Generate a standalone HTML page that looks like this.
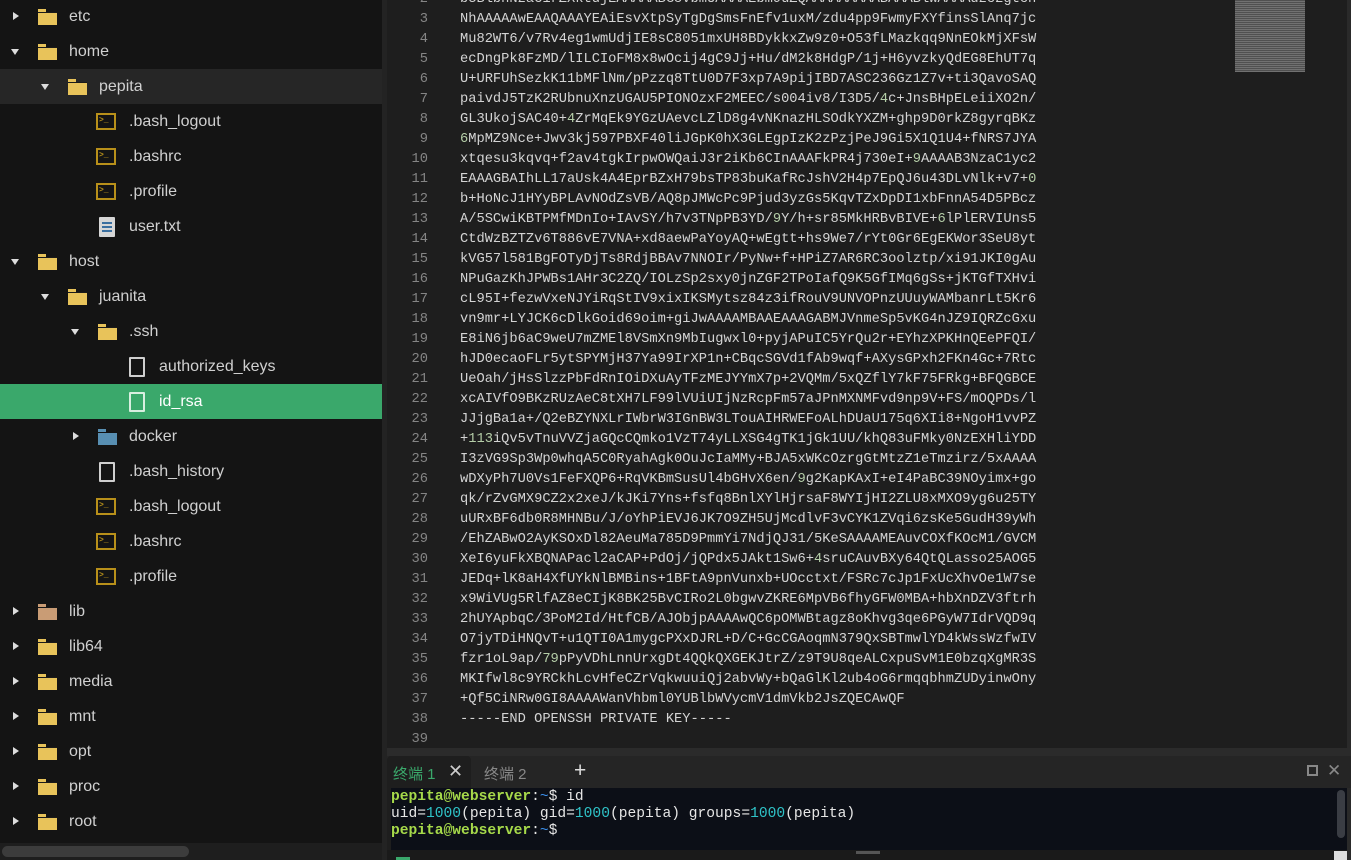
<!DOCTYPE html>
<html><head><meta charset="utf-8"><style>
*{margin:0;padding:0;box-sizing:border-box}
body{width:1351px;height:860px;overflow:hidden;background:#1e1e1e;position:relative;font-family:"Segoe UI","Liberation Sans","DejaVu Sans",sans-serif}
#side{position:absolute;left:0;top:0;width:382px;height:860px;background:#141414;overflow:hidden}
#gap{position:absolute;left:382px;top:0;width:5px;height:860px;background:#232323}
.row{position:absolute;left:0;width:382px;height:35px;color:#d0d0d0;font-size:16px;line-height:35px}
.row .t{position:absolute;top:0}
.arr{position:absolute;top:0;width:0;height:0}
.ar{border-top:4.5px solid transparent;border-bottom:4.5px solid transparent;border-left:6px solid #ddd;top:13px}
.ad{border-left:4.5px solid transparent;border-right:4.5px solid transparent;border-top:6px solid #ddd;top:15px}
.fold{position:absolute;top:10px;width:19px;height:15px}
.fold:before{content:"";position:absolute;left:0;top:0;width:8px;height:4px;background:#e8c35a}
.fold:after{content:"";position:absolute;left:0;top:3px;width:19px;height:12px;background:#e8c35a;border-top:1px solid #1a1a1a}
.term{position:absolute;top:9px;width:20px;height:17px;border:2px solid #b8901a;background:#141414;overflow:hidden}
.term:before{content:">_";position:absolute;left:1px;top:1px;font:bold 8px/9px "Liberation Mono",monospace;color:#b8901a}
.file{position:absolute;top:8px;width:16px;height:20px;border:2px solid #cfcfcf;border-radius:1px;background:transparent}
.doc{position:absolute;top:8px;width:16px;height:20px;background:#d6d6d6;border-radius:1px}
.doc i{position:absolute;left:3px;height:2px;background:#3a6fa0;width:10px}
#ed{position:absolute;left:387px;top:0;width:960px;height:748px;background:#1e1e1e;font-family:"Liberation Mono",monospace;font-size:13.72px;color:#d4d4d4;overflow:hidden}
.ln{position:absolute;left:0;width:41px;text-align:right;color:#858585}
.tx{position:absolute;left:73px;white-space:pre}
.g{color:#b5cea8}
#mm{position:absolute;left:1235px;top:0;width:70px;height:72px;background:repeating-linear-gradient(0deg,#7a7a7a 0 1px,#555 1px 2px);opacity:.9}
#tbar{position:absolute;left:387px;top:748px;width:964px;height:8px;background:#2b2b2b}
#tabs{position:absolute;left:387px;top:756px;width:964px;height:32px;background:#252525;font-family:"Liberation Sans","Noto Sans CJK SC",sans-serif;font-size:15px}
#term{position:absolute;left:391px;top:788px;width:956px;height:62px;background:#0c0f17;font-family:"Liberation Mono",monospace;font-size:14.6px;color:#e6e6e6;line-height:17px;padding-top:1px}
.pg{color:#a6d94a;font-weight:bold}
.cy{color:#2fc3c8}
.bl{color:#3b8eea}
</style></head><body>
<div id="side">
<div class="row" style="top:-1px"><span class="arr ar" style="left:13px"></span><span class="fold" style="left:38px"></span><span class="t" style="left:69px">etc</span></div>
<div class="row" style="top:34px"><span class="arr ad" style="left:11px"></span><span class="fold" style="left:38px"></span><span class="t" style="left:69px">home</span></div>
<div class="row" style="top:69px;background:#262626"><span class="arr ad" style="left:41px"></span><span class="fold" style="left:68px"></span><span class="t" style="left:99px">pepita</span></div>
<div class="row" style="top:104px"><span class="term" style="left:96px"></span><span class="t" style="left:129px">.bash_logout</span></div>
<div class="row" style="top:139px"><span class="term" style="left:96px"></span><span class="t" style="left:129px">.bashrc</span></div>
<div class="row" style="top:174px"><span class="term" style="left:96px"></span><span class="t" style="left:129px">.profile</span></div>
<div class="row" style="top:209px"><span class="doc" style="left:99px"><i style="top:5px"></i><i style="top:9px"></i><i style="top:13px"></i></span><span class="t" style="left:129px">user.txt</span></div>
<div class="row" style="top:244px"><span class="arr ad" style="left:11px"></span><span class="fold" style="left:38px"></span><span class="t" style="left:69px">host</span></div>
<div class="row" style="top:279px"><span class="arr ad" style="left:41px"></span><span class="fold" style="left:68px"></span><span class="t" style="left:99px">juanita</span></div>
<div class="row" style="top:314px"><span class="arr ad" style="left:71px"></span><span class="fold" style="left:98px"></span><span class="t" style="left:129px">.ssh</span></div>
<div class="row" style="top:349px"><span class="file" style="left:129px"></span><span class="t" style="left:159px">authorized_keys</span></div>
<div class="row" style="top:384px;background:#3aa86b;color:#fff"><span class="file" style="left:129px;border-color:#d8efe0"></span><span class="t" style="left:159px">id_rsa</span></div>
<div class="row" style="top:419px"><span class="arr ar" style="left:73px"></span><span class="fold" style="left:98px;filter:hue-rotate(170deg) saturate(1.3) brightness(.7)"></span><span class="t" style="left:129px">docker</span></div>
<div class="row" style="top:454px"><span class="file" style="left:99px"></span><span class="t" style="left:129px">.bash_history</span></div>
<div class="row" style="top:489px"><span class="term" style="left:96px"></span><span class="t" style="left:129px">.bash_logout</span></div>
<div class="row" style="top:524px"><span class="term" style="left:96px"></span><span class="t" style="left:129px">.bashrc</span></div>
<div class="row" style="top:559px"><span class="term" style="left:96px"></span><span class="t" style="left:129px">.profile</span></div>
<div class="row" style="top:594px"><span class="arr ar" style="left:13px"></span><span class="fold" style="left:38px;filter:hue-rotate(-25deg) saturate(.7) brightness(.85)"></span><span class="t" style="left:69px">lib</span></div>
<div class="row" style="top:629px"><span class="arr ar" style="left:13px"></span><span class="fold" style="left:38px"></span><span class="t" style="left:69px">lib64</span></div>
<div class="row" style="top:664px"><span class="arr ar" style="left:13px"></span><span class="fold" style="left:38px"></span><span class="t" style="left:69px">media</span></div>
<div class="row" style="top:699px"><span class="arr ar" style="left:13px"></span><span class="fold" style="left:38px"></span><span class="t" style="left:69px">mnt</span></div>
<div class="row" style="top:734px"><span class="arr ar" style="left:13px"></span><span class="fold" style="left:38px"></span><span class="t" style="left:69px">opt</span></div>
<div class="row" style="top:769px"><span class="arr ar" style="left:13px"></span><span class="fold" style="left:38px"></span><span class="t" style="left:69px">proc</span></div>
<div class="row" style="top:804px"><span class="arr ar" style="left:13px"></span><span class="fold" style="left:38px"></span><span class="t" style="left:69px">root</span></div>
<div style="position:absolute;left:0;top:843px;width:382px;height:17px;background:#1e1e1e"></div>
<div style="position:absolute;left:2px;top:846px;width:187px;height:11px;background:#3c3c3c;border-radius:6px"></div>
</div>
<div id="gap"></div>
<div id="ed">
<div style="position:absolute;left:0;top:-10px;width:960px;line-height:20px">
<div style="position:relative;height:20px"><span class="ln">2</span><span class="tx">b3BlbnNzaC1rZXktdjEAAAAABG5vbmUAAAAEbm9uZQAAAAAAAAABAAABlwAAAAdzc2gtcn</span></div>
<div style="position:relative;height:20px"><span class="ln">3</span><span class="tx">NhAAAAAwEAAQAAAYEAiEsvXtpSyTgDgSmsFnEfv1uxM/zdu4pp9FwmyFXYfinsSlAnq7jc</span></div>
<div style="position:relative;height:20px"><span class="ln">4</span><span class="tx">Mu82WT6/v7Rv4eg1wmUdjIE8sC8051mxUH8BDykkxZw9z0+O53fLMazkqq9NnEOkMjXFsW</span></div>
<div style="position:relative;height:20px"><span class="ln">5</span><span class="tx">ecDngPk8FzMD/lILCIoFM8x8wOcij4gC9Jj+Hu/dM2k8HdgP/1j+H6yvzkyQdEG8EhUT7q</span></div>
<div style="position:relative;height:20px"><span class="ln">6</span><span class="tx">U+URFUhSezkK11bMFlNm/pPzzq8TtU0D7F3xp7A9pijIBD7ASC236Gz1Z7v+ti3QavoSAQ</span></div>
<div style="position:relative;height:20px"><span class="ln">7</span><span class="tx">paivdJ5TzK2RUbnuXnzUGAU5PIONOzxF2MEEC/s004iv8/I3D5/<span class="g">4</span>c+JnsBHpELeiiXO2n/</span></div>
<div style="position:relative;height:20px"><span class="ln">8</span><span class="tx">GL3UkojSAC40+<span class="g">4</span>ZrMqEk9YGzUAevcLZlD8g4vNKnazHLSOdkYXZM+ghp9D0rkZ8gyrqBKz</span></div>
<div style="position:relative;height:20px"><span class="ln">9</span><span class="tx"><span class="g">6</span>MpMZ9Nce+Jwv3kj597PBXF40liJGpK0hX3GLEgpIzK2zPzjPeJ9Gi5X1Q1U4+fNRS7JYA</span></div>
<div style="position:relative;height:20px"><span class="ln">10</span><span class="tx">xtqesu3kqvq+f2av4tgkIrpwOWQaiJ3r2iKb6CInAAAFkPR4j730eI+<span class="g">9</span>AAAAB3NzaC1yc2</span></div>
<div style="position:relative;height:20px"><span class="ln">11</span><span class="tx">EAAAGBAIhLL17aUsk4A4EprBZxH79bsTP83buKafRcJshV2H4p7EpQJ6u43DLvNlk+v7+<span class="g">0</span></span></div>
<div style="position:relative;height:20px"><span class="ln">12</span><span class="tx">b+HoNcJ1HYyBPLAvNOdZsVB/AQ8pJMWcPc9Pjud3yzGs5KqvTZxDpDI1xbFnnA54D5PBcz</span></div>
<div style="position:relative;height:20px"><span class="ln">13</span><span class="tx">A/5SCwiKBTPMfMDnIo+IAvSY/h7v3TNpPB3YD/<span class="g">9</span>Y/h+sr85MkHRBvBIVE+<span class="g">6</span>lPlERVIUns5</span></div>
<div style="position:relative;height:20px"><span class="ln">14</span><span class="tx">CtdWzBZTZv6T886vE7VNA+xd8aewPaYoyAQ+wEgtt+hs9We7/rYt0Gr6EgEKWor3SeU8yt</span></div>
<div style="position:relative;height:20px"><span class="ln">15</span><span class="tx">kVG57l581BgFOTyDjTs8RdjBBAv7NNOIr/PyNw+f+HPiZ7AR6RC3oolztp/xi91JKI0gAu</span></div>
<div style="position:relative;height:20px"><span class="ln">16</span><span class="tx">NPuGazKhJPWBs1AHr3C2ZQ/IOLzSp2sxy0jnZGF2TPoIafQ9K5GfIMq6gSs+jKTGfTXHvi</span></div>
<div style="position:relative;height:20px"><span class="ln">17</span><span class="tx">cL95I+fezwVxeNJYiRqStIV9xixIKSMytsz84z3ifRouV9UNVOPnzUUuyWAMbanrLt5Kr6</span></div>
<div style="position:relative;height:20px"><span class="ln">18</span><span class="tx">vn9mr+LYJCK6cDlkGoid69oim+giJwAAAAMBAAEAAAGABMJVnmeSp5vKG4nJZ9IQRZcGxu</span></div>
<div style="position:relative;height:20px"><span class="ln">19</span><span class="tx">E8iN6jb6aC9weU7mZMEl8VSmXn9MbIugwxl0+pyjAPuIC5YrQu2r+EYhzXPKHnQEePFQI/</span></div>
<div style="position:relative;height:20px"><span class="ln">20</span><span class="tx">hJD0ecaoFLr5ytSPYMjH37Ya99IrXP1n+CBqcSGVd1fAb9wqf+AXysGPxh2FKn4Gc+7Rtc</span></div>
<div style="position:relative;height:20px"><span class="ln">21</span><span class="tx">UeOah/jHsSlzzPbFdRnIOiDXuAyTFzMEJYYmX7p+2VQMm/5xQZflY7kF75FRkg+BFQGBCE</span></div>
<div style="position:relative;height:20px"><span class="ln">22</span><span class="tx">xcAIVfO9BKzRUzAeC8tXH7LF99lVUiUIjNzRcpFm57aJPnMXNMFvd9np9V+FS/mOQPDs/l</span></div>
<div style="position:relative;height:20px"><span class="ln">23</span><span class="tx">JJjgBa1a+/Q2eBZYNXLrIWbrW3IGnBW3LTouAIHRWEFoALhDUaU175q6XIi8+NgoH1vvPZ</span></div>
<div style="position:relative;height:20px"><span class="ln">24</span><span class="tx">+<span class="g">113</span>iQv5vTnuVVZjaGQcCQmko1VzT74yLLXSG4gTK1jGk1UU/khQ83uFMky0NzEXHliYDD</span></div>
<div style="position:relative;height:20px"><span class="ln">25</span><span class="tx">I3zVG9Sp3Wp0whqA5C0RyahAgk0OuJcIaMMy+BJA5xWKcOzrgGtMtzZ1eTmzirz/5xAAAA</span></div>
<div style="position:relative;height:20px"><span class="ln">26</span><span class="tx">wDXyPh7U0Vs1FeFXQP6+RqVKBmSusUl4bGHvX6en/<span class="g">9</span>g2KapKAxI+eI4PaBC39NOyimx+go</span></div>
<div style="position:relative;height:20px"><span class="ln">27</span><span class="tx">qk/rZvGMX9CZ2x2xeJ/kJKi7Yns+fsfq8BnlXYlHjrsaF8WYIjHI2ZLU8xMXO9yg6u25TY</span></div>
<div style="position:relative;height:20px"><span class="ln">28</span><span class="tx">uURxBF6db0R8MHNBu/J/oYhPiEVJ6JK7O9ZH5UjMcdlvF3vCYK1ZVqi6zsKe5GudH39yWh</span></div>
<div style="position:relative;height:20px"><span class="ln">29</span><span class="tx">/EhZABwO2AyKSOxDl82AeuMa785D9PmmYi7NdjQJ31/5KeSAAAAMEAuvCOXfKOcM1/GVCM</span></div>
<div style="position:relative;height:20px"><span class="ln">30</span><span class="tx">XeI6yuFkXBQNAPacl2aCAP+PdOj/jQPdx5JAkt1Sw6+<span class="g">4</span>sruCAuvBXy64QtQLasso25AOG5</span></div>
<div style="position:relative;height:20px"><span class="ln">31</span><span class="tx">JEDq+lK8aH4XfUYkNlBMBins+1BFtA9pnVunxb+UOcctxt/FSRc7cJp1FxUcXhvOe1W7se</span></div>
<div style="position:relative;height:20px"><span class="ln">32</span><span class="tx">x9WiVUg5RlfAZ8eCIjK8BK25BvCIRo2L0bgwvZKRE6MpVB6fhyGFW0MBA+hbXnDZV3ftrh</span></div>
<div style="position:relative;height:20px"><span class="ln">33</span><span class="tx">2hUYApbqC/3PoM2Id/HtfCB/AJObjpAAAAwQC6pOMWBtagz8oKhvg3qe6PGyW7IdrVQD9q</span></div>
<div style="position:relative;height:20px"><span class="ln">34</span><span class="tx">O7jyTDiHNQvT+u1QTI0A1mygcPXxDJRL+D/C+GcCGAoqmN379QxSBTmwlYD4kWssWzfwIV</span></div>
<div style="position:relative;height:20px"><span class="ln">35</span><span class="tx">fzr1oL9ap/<span class="g">79</span>pPyVDhLnnUrxgDt4QQkQXGEKJtrZ/z9T9U8qeALCxpuSvM1E0bzqXgMR3S</span></div>
<div style="position:relative;height:20px"><span class="ln">36</span><span class="tx">MKIfwl8c9YRCkhLcvHfeCZrVqkwuuiQj2abvWy+bQaGlKl2ub4oG6rmqqbhmZUDyinwOny</span></div>
<div style="position:relative;height:20px"><span class="ln">37</span><span class="tx">+Qf5CiNRw0GI8AAAAWanVhbml0YUBlbWVycmV1dmVkb2JsZQECAwQF</span></div>
<div style="position:relative;height:20px"><span class="ln">38</span><span class="tx">-----END OPENSSH PRIVATE KEY-----</span></div>
<div style="position:relative;height:20px"><span class="ln">39</span><span class="tx"></span></div>
</div>
</div>
<div id="mm"></div>
<div style="position:absolute;left:1347px;top:0;width:4px;height:860px;background:#2a2a2a"></div>
<div id="tbar"></div>
<div id="tabs">
<div style="position:absolute;left:0;top:0;width:84px;height:32px;background:#1e1e1e;border-radius:4px 4px 0 0"></div>
<span style="position:absolute;left:6px;top:7px;color:#3aa86b">终端 1</span>
<span style="position:absolute;left:61px;top:5px;color:#ccc;font-size:18px">✕</span>
<span style="position:absolute;left:97px;top:7px;color:#888">终端 2</span>
<span style="position:absolute;left:187px;top:3px;color:#ddd;font-size:21px">+</span>
<span style="position:absolute;left:920px;top:9px;width:11px;height:11px;border:2px dashed #888"></span>
<span style="position:absolute;left:940px;top:5px;color:#888;font-size:17px">✕</span>
</div>
<div id="term">
<div><span class="pg">pepita@webserver</span>:<span class="bl">~</span>$ id</div>
<div>uid=<span class="cy">1000</span>(pepita) gid=<span class="cy">1000</span>(pepita) groups=<span class="cy">1000</span>(pepita)</div>
<div><span class="pg">pepita@webserver</span>:<span class="bl">~</span>$</div>
<div style="position:absolute;left:946px;top:2px;width:8px;height:48px;background:#3a3d44;border-radius:4px"></div>
</div>
<div style="position:absolute;left:387px;top:850px;width:960px;height:10px;background:#1a1a1a"></div>
<div style="position:absolute;left:856px;top:851px;width:24px;height:3px;background:#555"></div>
<div style="position:absolute;left:396px;top:857px;width:14px;height:3px;background:#3aa86b"></div>
<div style="position:absolute;left:1334px;top:851px;width:13px;height:9px;background:#ddd"></div>
</body></html>
